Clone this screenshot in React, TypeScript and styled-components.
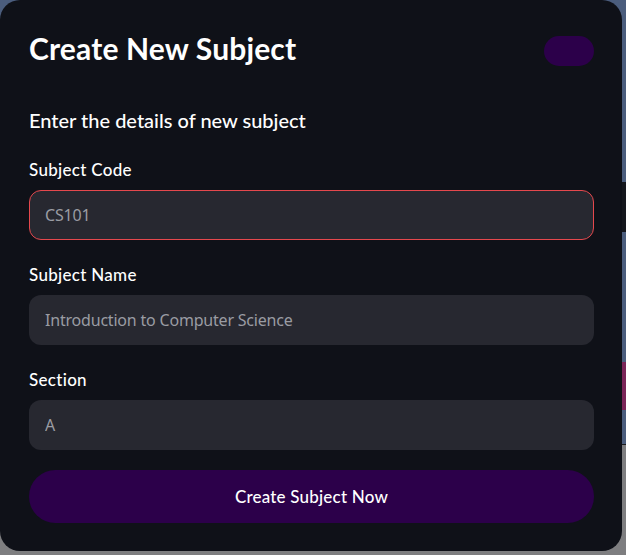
import React from "react"
import styled, { createGlobalStyle } from "styled-components"

const GlobalStyle = createGlobalStyle`
  html, body {
    margin: 0;
    padding: 0;
  }
  body {
    width: 626px;
    height: 555px;
    overflow: hidden;
    background: linear-gradient(to bottom, #4b5d7d 0, #4b5d7d 445px, #7e7e80 445px);
    font-family: Lato, "Noto Sans", sans-serif;
  }
`

const Backdrop = styled.div`
  display: flex;
  width: 626px;
  height: 555px;
  align-items: flex-start;
`

const Modal = styled.div`
  box-sizing: border-box;
  width: 622px;
  height: 551px;
  background: #0f1118;
  border-radius: 20px;
  padding: 30px 28px 28px 29px;
  display: flex;
  flex-direction: column;
`

const EdgeStrip = styled.div`
  width: 4px;
  height: 555px;
  display: flex;
  flex-direction: column;
`

const EdgeBand = styled.div<{ $height: number; $color: string }>`
  height: ${(p) => p.$height}px;
  background: ${(p) => p.$color};
`

const Header = styled.div`
  display: flex;
  align-items: center;
  justify-content: space-between;
`

const Title = styled.h2`
  margin: 0;
  font-size: 30px;
  line-height: 36px;
  font-weight: 700;
  color: #ffffff;
  letter-spacing: 0.15px;
`

const Pill = styled.button`
  width: 50px;
  height: 30px;
  border: none;
  border-radius: 15px;
  background: #2c004a;
  margin-top: 6px;
  padding: 0;
`

const Subtitle = styled.p`
  margin: 40px 0 0;
  font-size: 20px;
  line-height: 28px;
  font-weight: 500;
  color: #ffffff;
`

const Form = styled.form`
  margin-top: 24px;
  display: flex;
  flex-direction: column;
  gap: 23px;
`

const Field = styled.label`
  display: flex;
  flex-direction: column;
  gap: 8px;
`

const LabelText = styled.span`
  font-size: 17px;
  line-height: 24px;
  font-weight: 500;
  letter-spacing: 0.3px;
  color: #ffffff;
`

const Input = styled.input<{ $invalid?: boolean }>`
  box-sizing: border-box;
  height: 50px;
  width: 100%;
  border-radius: 12px;
  border: 1px solid ${(p) => (p.$invalid ? "#e5484d" : "transparent")};
  background: #272830;
  padding: 0 15px;
  font-family: "Noto Sans", "Open Sans", sans-serif;
  font-size: 16px;
  letter-spacing: -0.2px;
  color: #e6e6ea;
  caret-color: #ffffff;
  outline: none;

  &::placeholder {
    color: #9a9ca3;
  }
`

const SubmitButton = styled.button`
  margin-top: -3px;
  height: 53px;
  border: none;
  border-radius: 27px;
  background: #2c004a;
  color: #ffffff;
  font-family: Lato, "Noto Sans", sans-serif;
  font-size: 17px;
  font-weight: 500;
  letter-spacing: 0.2px;
  cursor: pointer;
`

const fields = [
  { label: "Subject Code", placeholder: "CS101", invalid: true },
  { label: "Subject Name", placeholder: "Introduction to Computer Science" },
  { label: "Section", placeholder: "A" },
]

const edgeBands = [
  { height: 182, color: "#4b5d7d" },
  { height: 50, color: "#15171d" },
  { height: 130, color: "#4b5d7d" },
  { height: 48, color: "#7a2558" },
  { height: 34, color: "#4b5d7d" },
  { height: 1, color: "#1a1a1c" },
  { height: 110, color: "#7e7e80" },
]

const App = () => {
  return (
    <>
      <GlobalStyle />
      <Backdrop>
        <Modal>
          <Header>
            <Title>Create New Subject</Title>
            <Pill type="button" aria-label="Close" />
          </Header>
          <Subtitle>Enter the details of new subject</Subtitle>
          <Form onSubmit={(e) => e.preventDefault()}>
            {fields.map((f, i) => (
              <Field key={f.label}>
                <LabelText>{f.label}</LabelText>
                <Input
                  placeholder={f.placeholder}
                  $invalid={f.invalid}
                  autoFocus={i === 0}
                />
              </Field>
            ))}
            <SubmitButton type="submit">Create Subject Now</SubmitButton>
          </Form>
        </Modal>
        <EdgeStrip>
          {edgeBands.map((b, i) => (
            <EdgeBand key={i} $height={b.height} $color={b.color} />
          ))}
        </EdgeStrip>
      </Backdrop>
    </>
  )
}

export default App
